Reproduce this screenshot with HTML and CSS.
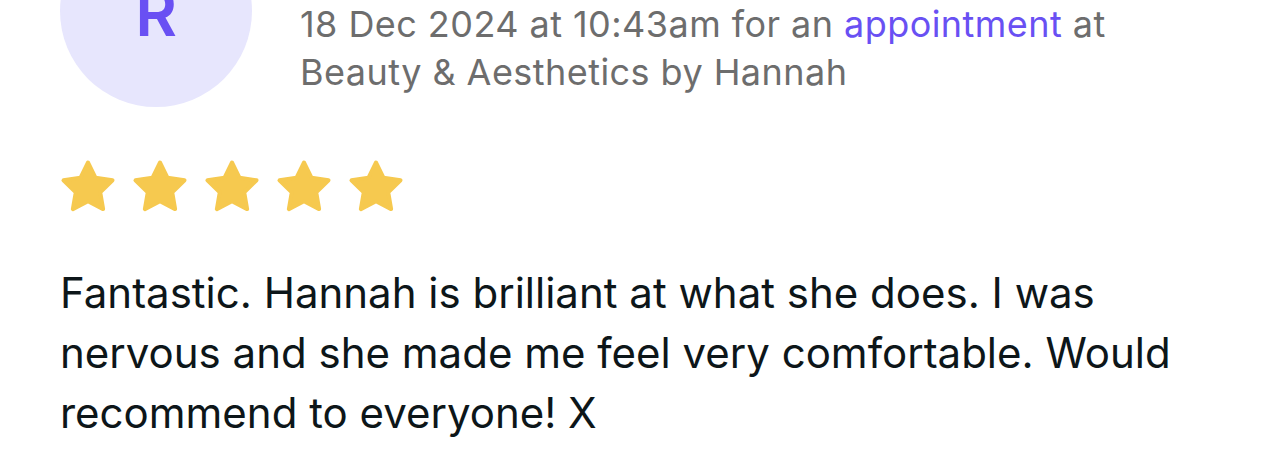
FILE: index.html
```html
<!DOCTYPE html>
<html lang="en">
<head>
<meta charset="utf-8">
<title>Review</title>
<link rel="stylesheet" href="styles.css">
</head>
<body>
<div class="review">
  <div class="review-head">
    <div class="avatar"><span class="avatar-letter">R</span></div>
    <p class="meta">18 Dec 2024 at 10:43am for an <a class="meta-link" href="#">appointment</a> at Beauty &amp; Aesthetics by Hannah</p>
  </div>
  <div class="stars">
    <svg class="star" viewBox="0.6 0.6 22.8 22.8"><path d="M12 2l3.09 6.26L22 9.27l-5 4.87 1.18 6.88L12 17.77l-6.18 3.25L7 14.14 2 9.27l6.91-1.01L12 2z"/></svg>
    <svg class="star" viewBox="0.6 0.6 22.8 22.8"><path d="M12 2l3.09 6.26L22 9.27l-5 4.87 1.18 6.88L12 17.77l-6.18 3.25L7 14.14 2 9.27l6.91-1.01L12 2z"/></svg>
    <svg class="star" viewBox="0.6 0.6 22.8 22.8"><path d="M12 2l3.09 6.26L22 9.27l-5 4.87 1.18 6.88L12 17.77l-6.18 3.25L7 14.14 2 9.27l6.91-1.01L12 2z"/></svg>
    <svg class="star" viewBox="0.6 0.6 22.8 22.8"><path d="M12 2l3.09 6.26L22 9.27l-5 4.87 1.18 6.88L12 17.77l-6.18 3.25L7 14.14 2 9.27l6.91-1.01L12 2z"/></svg>
    <svg class="star" viewBox="0.6 0.6 22.8 22.8"><path d="M12 2l3.09 6.26L22 9.27l-5 4.87 1.18 6.88L12 17.77l-6.18 3.25L7 14.14 2 9.27l6.91-1.01L12 2z"/></svg>
  </div>
  <p class="review-text">Fantastic. Hannah is brilliant at what she does. I was nervous and she made me feel very comfortable. Would recommend to everyone! X</p>
</div>
</body>
</html>
```

FILE: styles.css
```css
html, body {
  margin: 0;
  padding: 0;
  background: #ffffff;
  overflow: hidden;
}

body {
  font-family: Inter, "Noto Sans", "Liberation Sans", sans-serif;
  width: 1284px;
  height: 464px;
}

.review {
  padding: 0 60px;
}

.review-head {
  display: flex;
  align-items: flex-start;
  gap: 48px;
  height: 107px;
}

.avatar {
  flex: 0 0 192px;
  width: 192px;
  height: 192px;
  margin-top: -85px;
  padding-top: 4px;
  box-sizing: border-box;
  border-radius: 50%;
  background: #e7e6fd;
  display: flex;
  align-items: center;
  justify-content: center;
}

.avatar-letter {
  color: #6950f3;
  font-size: 64px;
  font-weight: 600;
  line-height: 1;
}

.meta {
  margin: 0;
  font-size: 36px;
  line-height: 48px;
  color: #6d6d6d;
  letter-spacing: 0.45px;
  max-width: 840px;
}

.meta-link {
  color: #6950f3;
  text-decoration: none;
}

.stars {
  display: flex;
  gap: 16px;
  margin-top: 52px;
}

.star {
  width: 56px;
  height: 56px;
  display: block;
}

.star path {
  fill: #f6c94f;
  stroke: #f6c94f;
  stroke-width: 1.6;
  stroke-linejoin: round;
}

.review-text {
  margin: 48px 0 0;
  font-size: 42px;
  line-height: 60px;
  color: #0d1619;
  letter-spacing: 0;
  max-width: 1140px;
}
```
